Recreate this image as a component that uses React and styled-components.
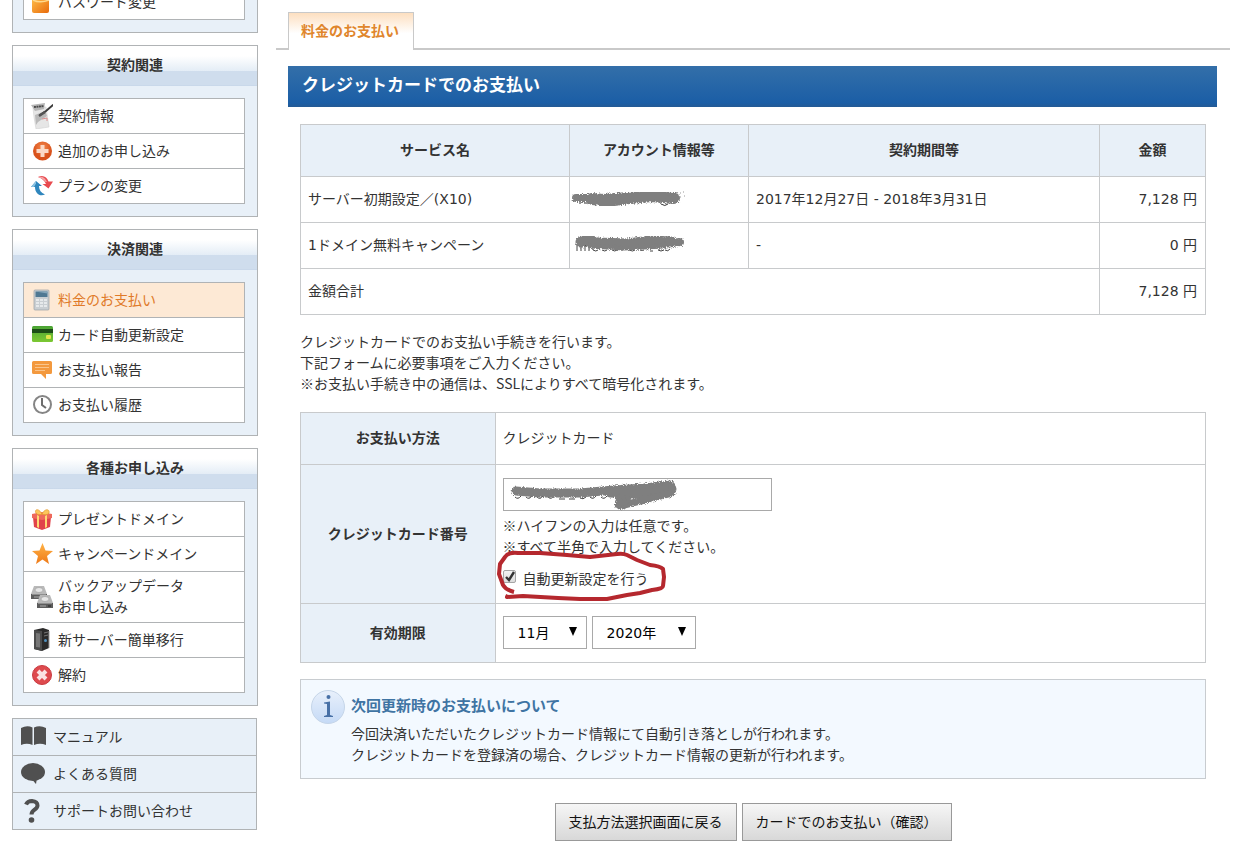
import React from "react";
import styled, { createGlobalStyle, css } from "styled-components";

const Global = createGlobalStyle`
  *, *::before, *::after { box-sizing: border-box; }
  body {
    margin: 0;
    background: #fff;
    color: #333;
    font-family: "DejaVu Sans", "Noto Sans CJK JP", sans-serif;
    font-size: 14px;
    line-height: 21px;
  }
  ul { list-style: none; margin: 0; padding: 0; }
  a { color: inherit; text-decoration: none; }
  button, input, select { font: inherit; }
`;

/* ---------- layout ---------- */
const Page = styled.div`
  display: flex;
  align-items: flex-start;
  gap: 18px;
  padding: 0 29px 0 12px;
`;

const Sidebar = styled.aside`
  flex: 0 0 246px;
  display: flex;
  flex-direction: column;
  gap: 12px;
`;

const Main = styled.main`
  flex: 1;
  min-width: 0;
  padding-top: 12px;
`;

/* ---------- sidebar ---------- */
const Panel = styled.section`
  border: 1px solid #b0b3b5;
  background: #e8f0f8;
  ${(p) => p.$clipped && css`margin-top: -29px;`}
`;

const PanelTitle = styled.h2`
  margin: 0;
  height: 40px;
  line-height: 39px;
  font-size: 14px;
  text-align: center;
  background: linear-gradient(#fff 0, #fff 25%, #e4edf6 62%, #cfdded 63%, #cfdded 97%, #c5d5e8 100%);
`;

const MenuList = styled.ul`
  margin: 12px 12px 12px 10px;
  border: 1px solid #b0b3b5;
  background: #fff;
`;

const MenuItem = styled.li`
  & + & { border-top: 1px solid #b0b3b5; }
`;

const MenuLink = styled.a`
  display: flex;
  align-items: center;
  gap: 5px;
  min-height: 34px;
  padding: 0 7px;
  padding-block: ${(p) => (p.$tall ? 4 : 0)}px;
  color: ${(p) => (p.$active ? "#e07a28" : "#333")};
  background: ${(p) => (p.$active ? "#fde9d5" : "transparent")};
  svg { flex: none; }
`;

const SupportList = styled.ul`
  margin-right: 1px;
  border: 1px solid #b0b3b5;
  background: #e8f0f8;
  li + li { border-top: 1px solid #b0b3b5; }
`;

const SupportLink = styled.a`
  display: flex;
  align-items: center;
  gap: 6px;
  height: 36px;
  padding: 0 8px;
  svg { flex: none; }
`;

/* ---------- main column ---------- */
const TabBar = styled.nav`
  display: flex;
  height: 38px;
  padding-left: 12px;
  border-bottom: 2px solid #c9c9c9;
`;

const Tab = styled.a`
  height: 38px;
  padding: 0 14px 0 12px;
  line-height: 36px;
  font-weight: bold;
  color: #e0862c;
  border: 1px solid #c9c9c9;
  border-bottom: 0;
  background: linear-gradient(#fddfc0, #fff 55%);
`;

const Body = styled.div`
  padding: 16px 13px 0 12px;
`;

const Heading = styled.h1`
  margin: 0;
  height: 41px;
  padding-left: 14px;
  line-height: 39px;
  font-size: 17px;
  color: #fff;
  background: linear-gradient(#336fa9, #1b5ea6 90%, #245a94);
`;

const Content = styled.div`
  padding: 17px 11px 0 12px;
`;

const Table = styled.table`
  width: 100%;
  table-layout: fixed;
  border-collapse: collapse;
  th, td { border: 1px solid #c8cacc; }
  th { background: #e8f0f8; padding: 0 7px; }
  td { padding: 0 7px; text-align: left; }
`;

const ServiceTable = styled(Table)`
  thead tr { height: 52px; }
  tbody tr { height: 46px; }
`;

const AmountCell = styled.td`
  && { text-align: right; padding-right: 8px; }
`;

const Lead = styled.p`
  margin: 16px 0 18px;
  font-family: "Noto Sans CJK JP", sans-serif;
`;

const FormTable = styled(Table)`
  td { padding: 12px 7px 13px; }
`;

const FormRow = styled.tr`
  height: ${(p) => p.$height}px;
`;

const CardField = styled.div`
  position: relative;
`;

const CardInput = styled.input`
  display: block;
  width: 269px;
  height: 33px;
  padding: 0 11px;
  border: 1px solid #a9a9a9;
  background: #fff;
`;

const Hint = styled.p`
  margin: 4px 0 12px;
  font-family: "Noto Sans CJK JP", sans-serif;
`;

const CheckRow = styled.label`
  position: relative;
  display: flex;
  width: fit-content;
  gap: 7px;
`;

const CheckBox = styled.input`
  appearance: none;
  width: 13px;
  height: 13px;
  margin: 1px 0 0;
  border: 1px solid #a5a5a5;
  border-radius: 2px;
  background: linear-gradient(#f3f3f3, #dcdcdc);
`;

const Tick = styled.svg`
  position: absolute;
  left: 1px;
  top: 1px;
`;

const Selects = styled.div`
  display: flex;
  gap: 5px;
`;

const SelectBox = styled.span`
  position: relative;
  width: ${(p) => p.$width}px;
  svg {
    position: absolute;
    right: 9px;
    top: 11px;
    pointer-events: none;
  }
`;

const Select = styled.select`
  appearance: none;
  display: block;
  width: 100%;
  height: 33px;
  padding: 2px 14px 0;
  border: 1px solid #a9a9a9;
  border-radius: 0;
  background: #fff;
  color: #000;
`;

const Notice = styled.section`
  display: flex;
  gap: 6px;
  margin-top: 16px;
  padding: 10px 10px 12px;
  border: 1px solid #c8ccd0;
  background: #f3f9ff;
  svg { flex: none; }
`;

const NoticeTitle = styled.h3`
  margin: 5px 0 7px;
  font-size: 15px;
  line-height: 22px;
  color: #3f74a3;
`;

const NoticeText = styled.p`
  margin: 0;
`;

const Actions = styled.div`
  display: flex;
  justify-content: center;
  gap: 5px;
  margin-top: 24px;
`;

const ActionButton = styled.button`
  height: 38px;
  padding: 0 13px;
  border: 1px solid #999;
  background: linear-gradient(#f6f6f6, #d8d8d8);
  color: #111;
`;

/* Marker strokes drawn on top of the page */
const Mark = styled.svg`
  position: absolute;
  overflow: visible;
  pointer-events: none;
  left: ${(p) => p.$x}px;
  top: ${(p) => p.$y}px;
`;

const Covered = styled.div`
  position: relative;
  height: 21px;
`;

/* ---------- icons ---------- */
const Icon = ({ children, size = 22, height = size }) => (
  <svg width={size} height={height} viewBox={`0 0 ${size} ${height}`} aria-hidden="true">
    {children}
  </svg>
);

const LockIcon = () => (
  <Icon>
    <defs>
      <linearGradient id="lock" x1="0" x2="1" y2="1">
        <stop offset="0" stopColor="#ffc04a" />
        <stop offset="1" stopColor="#e86a0c" />
      </linearGradient>
    </defs>
    <path d="M5 9V6a6 6 0 0 1 12 0v3" fill="none" stroke="#bbb" strokeWidth="2" />
    <rect x="1" y="6" width="17" height="16" rx="2" fill="url(#lock)" />
    <path d="M2 9c6 3 11 2 16 0" stroke="#ffd98c" strokeWidth="1.500" fill="none" />
  </Icon>
);

const ContractIcon = () => (
  <Icon height={26}>
    <path d="M2 5l13-1 1 7 2 13-13 2-2-12z" fill="#e6e6e6" stroke="#d2d2d2" strokeWidth="0.600" />
    <path d="M0 2l14-2-1 6-9 2z" fill="#b5b5b5" />
    <path d="M3 4l10-1" stroke="#4a4a4a" strokeWidth="1.800" strokeDasharray="2 .5" />
    <path d="M4 12l10-4 2 5-9 6-2 3z" fill="#b9b9b9" />
    <path d="M22 2l-7 6-6 4" stroke="#3b3b3b" strokeWidth="2" fill="none" strokeLinecap="round" />
    <path d="M14 9l-6 4" stroke="#555" strokeWidth="2.500" />
    <path d="M11 16l5-1v3" stroke="#dc9090" fill="none" />
  </Icon>
);

const PlusIcon = () => (
  <Icon>
    <defs>
      <radialGradient id="plus" cy="0.3">
        <stop offset="0" stopColor="#f3884e" />
        <stop offset="1" stopColor="#d9521b" />
      </radialGradient>
    </defs>
    <circle cx="11.500" cy="11" r="9.500" fill="url(#plus)" />
    <path d="M9.500 5h4v4h4v4h-4v4h-4v-4h-4V9h4z" fill="#fbd9c6" />
  </Icon>
);

const SwapIcon = () => (
  <Icon>
    <path d="M7 2c5-2.500 9 0 10.500 4.500H22L17.500 13.500 11.500 9H15C13 5 10.500 3 7 2z" fill="#e84a4f" />
    <path d="M7 2c4-1 7 0 9 5h-1.500C13 5 10.500 3 7 2z" fill="#f5a3a5" />
    <path d="M0 12L5 6l6 5H8c0 4 2 7 6 8.500C9 22 4 18.500 4 12z" fill="#2f86bd" />
    <path d="M0 12l5-6v2.500l-2 3.500z" fill="#8cc3e2" />
  </Icon>
);

const CalculatorIcon = () => (
  <Icon>
    <rect x="3" y="1" width="15" height="20" rx="1" fill="#c9ced2" stroke="#9aa1a6" strokeWidth="0.700" />
    <rect x="4.500" y="2.500" width="12" height="5.500" fill="#4f7893" />
    <path d="M4.500 2.500h12v2z" fill="#83a5ba" />
    {[10, 13, 16].map((y) =>
      [5, 9, 13].map((x) => <rect key={`${x}${y}`} x={x} y={y} width="3" height="2" fill="#e6e9eb" />)
    )}
  </Icon>
);

const CardIcon = () => (
  <Icon>
    <defs>
      <linearGradient id="card" x2="0" y2="1">
        <stop offset="0" stopColor="#4aa334" />
        <stop offset="1" stopColor="#7cc832" />
      </linearGradient>
    </defs>
    <rect x="1" y="2" width="21" height="16" rx="1.500" fill="url(#card)" />
    <path d="M1 5h21v4H1z" fill="#1c4d16" />
    <rect x="15" y="11" width="5" height="4" rx="1" fill="#e2e64a" />
  </Icon>
);

const BubbleIcon = () => (
  <Icon>
    <path d="M2.500 2h17q1.500 0 1.500 1.500v10q0 1.500-1.500 1.500H15v5l-5-5H2.500Q1 15 1 13.500v-10Q1 2 2.500 2z" fill="#f3993e" />
    <path d="M4 5.500h14M4 8.500h14M4 11.500h10" stroke="#fac58b" />
  </Icon>
);

const ClockIcon = () => (
  <Icon>
    <circle cx="11.500" cy="10.500" r="8.500" fill="#fff" stroke="#858585" strokeWidth="2" />
    <path d="M11 4v7l4 3" fill="none" stroke="#6d6d6d" strokeWidth="2" />
  </Icon>
);

const GiftIcon = () => (
  <Icon>
    <path d="M2 9h18l-1 10-8 3-8-3z" fill="#e1434a" />
    <path d="M1 6l10-2 10 2v4l-10 2L1 10z" fill="#ee6a5c" />
    <path d="M6 7l2 1v12l-2-1zM14 8l2-1v12l-2 1z" fill="#ffd873" />
    <path d="M11 6C7-1 3 2 5 5c1 2 4 2 6 1 2 1 6 1 7-1 1-4-4-5-7 1z" fill="#fbc65e" stroke="#e69a2f" strokeWidth="0.800" />
  </Icon>
);

const StarIcon = () => (
  <Icon>
    <defs>
      <linearGradient id="star" x2="0" y2="1">
        <stop offset="0" stopColor="#ffb347" />
        <stop offset="1" stopColor="#ee7a18" />
      </linearGradient>
    </defs>
    <path d="M11.500 0l3 7.500 7.500.5-6 5 2 8-6.500-4.500L5 21l2-8L1 8l7.500-.5z" fill="url(#star)" />
  </Icon>
);

const DrivesIcon = () => (
  <Icon height={24}>
    {[[0, 1], [6, 10]].map(([x, y]) => (
      <g key={x} transform={`translate(${x} ${y})`}>
        <path d="M3 0h10l3 8H0z" fill="#b9b9b9" />
        <ellipse cx="8" cy="4" rx="4" ry="2.500" fill="#e6e6e6" stroke="#999" strokeWidth="0.600" />
        <path d="M0 8h16v5H0z" fill="#5c5c5c" />
        <path d="M1 8.500h14" stroke="#8f8f8f" />
        <path d="M3 11h6" stroke="#aaa" />
        <path d="M11 11h3" stroke="#222" />
      </g>
    ))}
  </Icon>
);

const ServerIcon = () => (
  <Icon height={24}>
    <path d="M3 2l9-2 6 2v18l-7 3-8-2z" fill="#2a2a2a" />
    <path d="M3 2l8 1v20l-8-2z" fill="#4c4c4c" />
    <path d="M5 5l4 .5v14L5 19z" fill="#777" />
    <path d="M13 5l4-1M13 8l4-1" stroke="#777" />
    <circle cx="14.500" cy="12.500" r="1.500" fill="#4f8fbd" />
    <path d="M18 3v17" stroke="#999" />
  </Icon>
);

const CancelIcon = () => (
  <Icon>
    <circle cx="11" cy="11" r="9.500" fill="#de4a4e" stroke="#c93a40" />
    <path d="M7 7l8 8M15 7l-8 8" stroke="#fbe3e3" strokeWidth="4" />
  </Icon>
);

const BookIcon = () => (
  <Icon size={26}>
    <path d="M0 4q6-3 11.500-.5V21Q6 18.500 0 21zM13 3.500Q19 1 25 4v17q-6-2.500-12 0z" fill="#505050" />
  </Icon>
);

const ChatIcon = () => (
  <Icon size={26}>
    <ellipse cx="12" cy="11" rx="12" ry="9" fill="#505050" />
    <path d="M11 18q2 3 4 5l1-6z" fill="#505050" />
  </Icon>
);

const QuestionIcon = () => (
  <Icon size={26}>
    <path d="M5 6.500q1.500-3.500 6-3.500 5.500.5 5.500 4.500c0 4.500-6 4-6 9" fill="none" stroke="#505050" strokeWidth="4" />
    <circle cx="10.500" cy="22" r="2.800" fill="#505050" />
  </Icon>
);

const InfoIcon = () => (
  <Icon size={34}>
    <defs>
      <linearGradient id="info" x2="0" y2="1">
        <stop offset="0" stopColor="#e8f0fb" />
        <stop offset="1" stopColor="#c5daf6" />
      </linearGradient>
    </defs>
    <circle cx="17" cy="17" r="16.500" fill="url(#info)" stroke="#c5d5e8" />
    <circle cx="17.500" cy="7" r="2" fill="#4770a6" />
    <path d="M13 12.500l6-1V25l3 1v1H13v-1l3-1V14l-3-.5z" fill="#4770a6" />
  </Icon>
);

const Arrow = () => (
  <Icon size={10} height={9}>
    <path d="M1 0h8L5 9z" fill="#000" />
  </Icon>
);

const Rough = ({ id }) => (
  <filter id={id} x="-10%" y="-30%" width="120%" height="160%">
    <feTurbulence type="fractalNoise" baseFrequency="0.9" numOctaves="1" />
    <feDisplacementMap in="SourceGraphic" scale="5" xChannelSelector="R" yChannelSelector="G" />
  </filter>
);

/* ---------- data ---------- */
const contractMenu = [
  ["契約情報", ContractIcon],
  ["追加のお申し込み", PlusIcon],
  ["プランの変更", SwapIcon],
];
const paymentMenu = [
  ["料金のお支払い", CalculatorIcon, true],
  ["カード自動更新設定", CardIcon],
  ["お支払い報告", BubbleIcon],
  ["お支払い履歴", ClockIcon],
];
const applyMenu = [
  ["プレゼントドメイン", GiftIcon],
  ["キャンペーンドメイン", StarIcon],
  ["バックアップデータ\nお申し込み", DrivesIcon],
  ["新サーバー簡単移行", ServerIcon],
  ["解約", CancelIcon],
];
const supportMenu = [
  ["マニュアル", BookIcon],
  ["よくある質問", ChatIcon],
  ["サポートお問い合わせ", QuestionIcon],
];

const Menu = ({ title, items }) => (
  <Panel $clipped={!title}>
    {title && <PanelTitle>{title}</PanelTitle>}
    <MenuList>
      {items.map(([label, Glyph, active]) => {
        const lines = label.split("\n");
        return (
          <MenuItem key={label}>
            <MenuLink href="#" $active={active} $tall={lines.length > 1}>
              <Glyph />
              <span>
                {lines.map((line, i) => (
                  <React.Fragment key={line}>
                    {i > 0 && <br />}
                    {line}
                  </React.Fragment>
                ))}
              </span>
            </MenuLink>
          </MenuItem>
        );
      })}
    </MenuList>
  </Panel>
);

export default function App() {
  return (
    <>
      <Global />
      <Page>
        <Sidebar>
          <Menu items={[["パスワード変更", LockIcon]]} />
          <Menu title="契約関連" items={contractMenu} />
          <Menu title="決済関連" items={paymentMenu} />
          <Menu title="各種お申し込み" items={applyMenu} />
          <SupportList>
            {supportMenu.map(([label, Glyph]) => (
              <li key={label}>
                <SupportLink href="#">
                  <Glyph />
                  {label}
                </SupportLink>
              </li>
            ))}
          </SupportList>
        </Sidebar>

        <Main>
          <TabBar>
            <Tab href="#">料金のお支払い</Tab>
          </TabBar>
          <Body>
            <Heading>クレジットカードでのお支払い</Heading>
            <Content>
              <ServiceTable>
                <colgroup>
                  <col style={{ width: "29.7%" }} />
                  <col style={{ width: "19.8%" }} />
                  <col style={{ width: "38.8%" }} />
                  <col style={{ width: "11.7%" }} />
                </colgroup>
                <thead>
                  <tr>
                    <th>サービス名</th>
                    <th>アカウント情報等</th>
                    <th>契約期間等</th>
                    <th>金額</th>
                  </tr>
                </thead>
                <tbody>
                  <tr>
                    <td>サーバー初期設定／(X10)</td>
                    <td>
                      <Covered>
                        <Mark $x={-7} $y={-1} width="116" height="20" aria-hidden="true">
                          <Rough id="rough1" />
                          <path d="M9 15h2M14 15h4M91 16q4 3 7 0" stroke="#333" fill="none" />
                          <g filter="url(#rough1)" fill="none" stroke="#7f7f7f" strokeLinecap="round" strokeLinejoin="round">
                            <path d="M6 10h18" strokeWidth="8" />
                            <path d="M22 11l12 1 24-2 24-2 22 2" strokeWidth="12" />
                            <path d="M32 15l24-3 22-4 16-1" strokeWidth="9" />
                          </g>
                          <path d="M110 5h1M113 4h1M114 8h1M110 9h1" stroke="#999" />
                        </Mark>
                      </Covered>
                    </td>
                    <td>2017年12月27日 - 2018年3月31日</td>
                    <AmountCell>7,128 円</AmountCell>
                  </tr>
                  <tr>
                    <td>1ドメイン無料キャンペーン</td>
                    <td>
                      <Covered>
                        <Mark $x={-3} $y={-3} width="112" height="24" aria-hidden="true">
                          <Rough id="rough2" />
                          <path
                            d="M3 12v7M7 19v-5q2-3 4 0v5m0-5q2-3 4 0v5M19 14v4q3 2 5 0M28 18q3 2 5 0M38 18q3 2 5 0v-3M48 19v-5M55 18q4 2 6 0M66 18q3 1 4 0M76 19h3M84 18q3 2 6 0M91 18q3 2 5-1"
                            fill="none"
                            stroke="#444"
                          />
                          <g filter="url(#rough2)" fill="none" stroke="#7f7f7f" strokeLinecap="round" strokeLinejoin="round">
                            <path d="M7 10l6-3 10 4 30 1 24-3 20 1" strokeWidth="11" />
                            <path d="M94 11l12-1" strokeWidth="8" />
                            <path d="M16 14l34 2 40-2" strokeWidth="5" />
                          </g>
                        </Mark>
                      </Covered>
                    </td>
                    <td>-</td>
                    <AmountCell>0 円</AmountCell>
                  </tr>
                  <tr>
                    <td colSpan={3}>金額合計</td>
                    <AmountCell>7,128 円</AmountCell>
                  </tr>
                </tbody>
              </ServiceTable>

              <Lead>
                クレジットカードでのお支払い手続きを行います。
                <br />
                下記フォームに必要事項をご入力ください。
                <br />
                ※お支払い手続き中の通信は、SSLによりすべて暗号化されます。
              </Lead>

              <FormTable>
                <colgroup>
                  <col style={{ width: "21.5%" }} />
                  <col />
                </colgroup>
                <tbody>
                  <FormRow $height={52}>
                    <th scope="row">お支払い方法</th>
                    <td>クレジットカード</td>
                  </FormRow>
                  <FormRow $height={139}>
                    <th scope="row">
                      <label htmlFor="card">クレジットカード番号</label>
                    </th>
                    <td>
                      <CardField>
                        <CardInput id="card" type="text" />
                        <Mark $x={5} $y={0} width="170" height="34" aria-hidden="true">
                          <Rough id="rough3" />
                          <path
                            d="M7 19q3 3 6-1M18 19q3 3 6-1M29 19q3 3 6-1M40 19q3 3 6-1M51 21h6M61 21h6M72 20q3 2 6-1M82 19q3 3 6-1M93 19q3 3 6-1M122 13v8M128 19q3 3 6-1M140 14v7M146 19q3 3 6-1"
                            fill="none"
                            stroke="#444"
                          />
                          <g filter="url(#rough3)" fill="none" stroke="#7f7f7f" strokeLinecap="round" strokeLinejoin="round">
                            <path d="M8 13l24 2 40 0 34-3 30-2 26-3" strokeWidth="9" />
                            <path d="M102 15l26 1 36-5" strokeWidth="9" />
                            <path d="M164 8v7l-20 5-20 5-12 3" strokeWidth="7" />
                            <path d="M110 18l-2 10 8 2 6-10z" strokeWidth="3" fill="#7f7f7f" />
                          </g>
                        </Mark>
                      </CardField>
                      <Hint>
                        ※ハイフンの入力は任意です。
                        <br />
                        ※すべて半角で入力してください。
                      </Hint>
                      <CheckRow>
                        <CheckBox type="checkbox" defaultChecked />
                        <Tick width="12" height="12" viewBox="0 0 12 12" aria-hidden="true">
                          <path d="M2 7l3 3 5-8" fill="none" stroke="#333" strokeWidth="2.400" />
                        </Tick>
                        自動更新設定を行う
                        <Mark $x={-5} $y={-17} width="168" height="50" viewBox="0 0 168 50" aria-hidden="true">
                          <path
                            d="M10 43L9 45 25 44 60 46 82 47 109 47 129 43 142 41 154 38Q165 37 165 34L166 25 165 17Q162 14 152 13L139 8 129 3Q125 1 119 2L92 5 69 3 42 1 20 1Q10 0 7 5L2 12 1 22 5 33Q8 38 16 40"
                            fill="none"
                            stroke="#b5282e"
                            strokeWidth="4"
                            strokeLinejoin="round"
                          />
                        </Mark>
                      </CheckRow>
                    </td>
                  </FormRow>
                  <FormRow $height={59}>
                    <th scope="row">有効期限</th>
                    <td>
                      <Selects>
                        <SelectBox $width={84}>
                          <Select aria-label="月" defaultValue="11月">
                            <option>11月</option>
                          </Select>
                          <Arrow />
                        </SelectBox>
                        <SelectBox $width={104}>
                          <Select aria-label="年" defaultValue="2020年">
                            <option>2020年</option>
                          </Select>
                          <Arrow />
                        </SelectBox>
                      </Selects>
                    </td>
                  </FormRow>
                </tbody>
              </FormTable>

              <Notice>
                <InfoIcon />
                <div>
                  <NoticeTitle>次回更新時のお支払いについて</NoticeTitle>
                  <NoticeText>
                    今回決済いただいたクレジットカード情報にて自動引き落としが行われます。
                    <br />
                    クレジットカードを登録済の場合、クレジットカード情報の更新が行われます。
                  </NoticeText>
                </div>
              </Notice>

              <Actions>
                <ActionButton type="button">支払方法選択画面に戻る</ActionButton>
                <ActionButton type="submit">カードでのお支払い（確認）</ActionButton>
              </Actions>
            </Content>
          </Body>
        </Main>
      </Page>
    </>
  );
}
